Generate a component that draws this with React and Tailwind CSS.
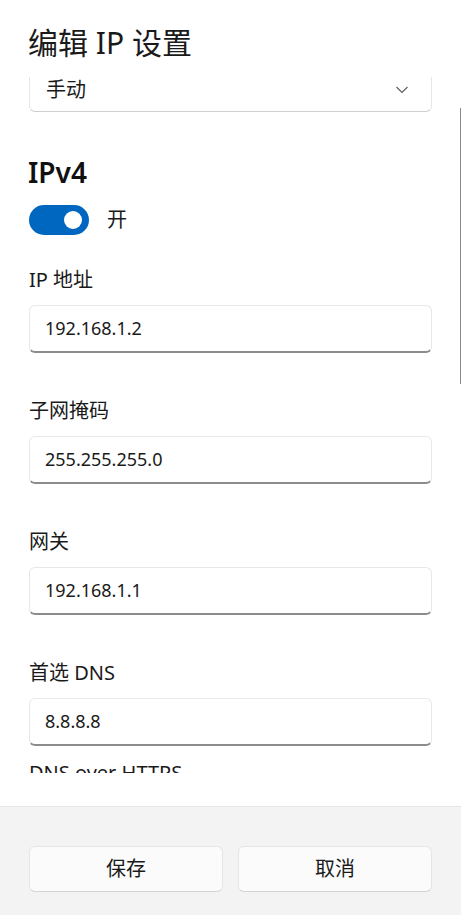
const font = {
  fontFamily: '"Noto Sans", "Noto Sans CJK SC", sans-serif',
};

const Field = ({ label, value, className }) => {
  return (
    <div className={className}>
      <div className="text-[20px] leading-[28px] text-[#1a1a1a]">{label}</div>
      <div className="mt-[11px] h-[48px] rounded-[6px] border border-[#e8e8e8] border-b-2 border-b-[#8c8c8c] bg-white flex items-center px-[15px]">
        <span className="text-[18px] text-[#1a1a1a]">{value}</span>
      </div>
    </div>
  );
};

const App = () => {
  return (
    <div
      className="w-[461px] h-[915px] bg-white flex flex-col overflow-hidden"
      style={font}
    >
      <header className="h-[77px] shrink-0 pt-[24px] pl-[28px]">
        <h1 className="text-[30px] leading-[38px] text-[#1a1a1a]">
          编辑 IP 设置
        </h1>
      </header>

      <div className="relative h-[696px] shrink-0 overflow-hidden">
        <div className="mt-[-13px] px-[29px] flex flex-col">
          <div className="h-[48px] rounded-[6px] border border-[#e6e6e6] border-b-[#cfcfcf] bg-white flex items-center justify-between pl-[16px] pr-[23px] pt-[4px]">
            <span className="text-[20px] leading-[22px] text-[#1a1a1a]">手动</span>
            <svg width="12" height="8" viewBox="0 0 12 8">
              <path
                d="M0.5 1 L6 6.5 L11.5 1"
                fill="none"
                stroke="#5a5a5a"
                strokeWidth="1.1"
              />
            </svg>
          </div>

          <h2 className="mt-[42px] ml-[-1px] text-[28px] leading-[36px] font-semibold text-[#111]">
            IPv4
          </h2>

          <div className="mt-[15px] flex items-center gap-[18px]">
            <div className="w-[60px] h-[30px] rounded-full bg-[#0067c0] flex items-center justify-end pr-[7px]">
              <div className="w-[18px] h-[18px] rounded-full bg-white" />
            </div>
            <span className="text-[20px] text-[#1a1a1a]">开</span>
          </div>

          <Field className="mt-[31px]" label="IP 地址" value="192.168.1.2" />
          <Field className="mt-[44px]" label="子网掩码" value="255.255.255.0" />
          <Field className="mt-[44px]" label="网关" value="192.168.1.1" />
          <Field className="mt-[44px]" label="首选 DNS" value="8.8.8.8" />

          <div className="mt-[13px] text-[20px] leading-[28px] text-[#1a1a1a]">
            DNS over HTTPS
          </div>
        </div>

        <div className="absolute right-0 top-[31px] w-px h-[276px] bg-[#8a8a8a]" />
      </div>

      <div className="h-[33px] shrink-0" />

      <footer className="flex-1 border-t border-[#e5e5e5] bg-[#f3f3f3] px-[29px] pt-[39px]">
        <div className="grid grid-cols-2 gap-[15px]">
          <button className="h-[46px] rounded-[6px] border border-[#e5e5e5] border-b-[#d4d4d4] bg-[#fbfbfb] text-[20px] text-[#1a1a1a]">
            保存
          </button>
          <button className="h-[46px] rounded-[6px] border border-[#e5e5e5] border-b-[#d4d4d4] bg-[#fbfbfb] text-[20px] text-[#1a1a1a]">
            取消
          </button>
        </div>
      </footer>
    </div>
  );
};

export default App;
